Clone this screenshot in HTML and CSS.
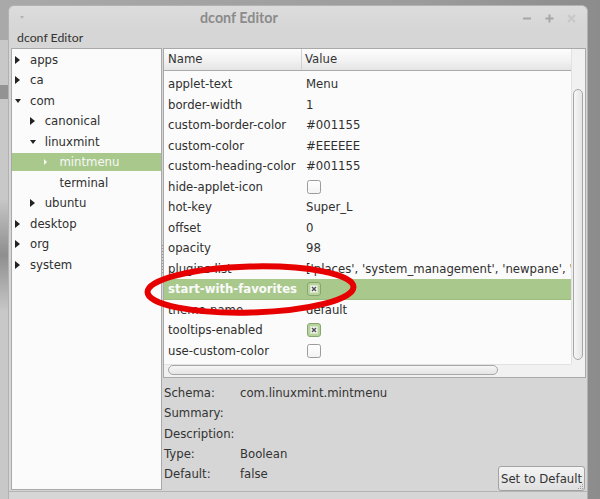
FILE: index.html
```html
<!DOCTYPE html>
<html>
<head>
<meta charset="utf-8">
<title>dconf Editor</title>
<link rel="stylesheet" href="styles.css">
</head>
<body>
<div class="window">
  <div class="titlebar">
    <span class="win-menu"></span>
    <span class="title">dconf Editor</span>
    <svg class="wm-buttons" width="54" height="12" viewBox="0 0 54 12">
      <line x1="0" y1="6.5" x2="8" y2="6.5" stroke="#a6a6a6" stroke-width="2"/>
      <line x1="22.5" y1="6.5" x2="30.5" y2="6.5" stroke="#a6a6a6" stroke-width="2"/>
      <line x1="26.5" y1="2.5" x2="26.5" y2="10.5" stroke="#a6a6a6" stroke-width="2"/>
      <line x1="45" y1="3" x2="52" y2="10" stroke="#c8c8c8" stroke-width="2"/>
      <line x1="52" y1="3" x2="45" y2="10" stroke="#c8c8c8" stroke-width="2"/>
    </svg>
  </div>
  <div class="menubar">dconf Editor</div>
  <div class="client">
    <div class="tree">
      <div class="node l0"><span class="exp closed"></span><span>apps</span></div>
      <div class="node l0"><span class="exp closed"></span><span>ca</span></div>
      <div class="node l0"><span class="exp open"></span><span>com</span></div>
      <div class="node l1"><span class="exp closed"></span><span>canonical</span></div>
      <div class="node l1"><span class="exp open"></span><span>linuxmint</span></div>
      <div class="node l2 sel"><span class="exp closed"></span><span>mintmenu</span></div>
      <div class="node l2"><span class="exp none"></span><span>terminal</span></div>
      <div class="node l1"><span class="exp closed"></span><span>ubuntu</span></div>
      <div class="node l0"><span class="exp closed"></span><span>desktop</span></div>
      <div class="node l0"><span class="exp closed"></span><span>org</span></div>
      <div class="node l0"><span class="exp closed"></span><span>system</span></div>
    </div>
    <div class="handle"><div class="grip"></div></div>
    <div class="right">
      <div class="keys">
        <div class="keys-main">
          <div class="keys-view">
            <div class="header">
              <div class="hcol hname">Name</div>
              <div class="hcol hvalue">Value</div>
            </div>
            <div class="rows">
              <div class="row"><span class="kname">applet-text</span><span class="kval">Menu</span></div>
              <div class="row"><span class="kname">border-width</span><span class="kval">1</span></div>
              <div class="row"><span class="kname">custom-border-color</span><span class="kval">#001155</span></div>
              <div class="row"><span class="kname">custom-color</span><span class="kval">#EEEEEE</span></div>
              <div class="row"><span class="kname">custom-heading-color</span><span class="kval">#001155</span></div>
              <div class="row"><span class="kname">hide-applet-icon</span><span class="kval"><span class="check"></span></span></div>
              <div class="row"><span class="kname">hot-key</span><span class="kval">Super_L</span></div>
              <div class="row"><span class="kname">offset</span><span class="kval">0</span></div>
              <div class="row"><span class="kname">opacity</span><span class="kval">98</span></div>
              <div class="row"><span class="kname">plugins-list</span><span class="kval">['places', 'system_management', 'newpane', 'system', 'applications']</span></div>
              <div class="row sel"><span class="kname">start-with-favorites</span><span class="kval"><svg class="checked" width="14" height="14" viewBox="0 0 14 14"><rect x="0.5" y="0.5" width="13" height="13" rx="2.5" fill="#b7d49c" stroke="#87a56f"/><rect x="3.5" y="3.5" width="7" height="7" fill="#f6f6f6" stroke="#d9e6cc" stroke-width="1"/><line x1="5" y1="5" x2="9" y2="9" stroke="#505050" stroke-width="1.4"/><line x1="9" y1="5" x2="5" y2="9" stroke="#505050" stroke-width="1.4"/></svg></span></div>
              <div class="row"><span class="kname">theme-name</span><span class="kval">default</span></div>
              <div class="row"><span class="kname">tooltips-enabled</span><span class="kval"><svg class="checked" width="14" height="14" viewBox="0 0 14 14"><rect x="0.5" y="0.5" width="13" height="13" rx="2.5" fill="#b7d49c" stroke="#87a56f"/><rect x="3.5" y="3.5" width="7" height="7" fill="#f6f6f6" stroke="#d9e6cc" stroke-width="1"/><line x1="5" y1="5" x2="9" y2="9" stroke="#505050" stroke-width="1.4"/><line x1="9" y1="5" x2="5" y2="9" stroke="#505050" stroke-width="1.4"/></svg></span></div>
              <div class="row"><span class="kname">use-custom-color</span><span class="kval"><span class="check"></span></span></div>
            </div>
          </div>
          <div class="vscroll"><div class="vthumb"></div></div>
        </div>
        <div class="hscroll">
          <div class="htrough"><div class="hthumb"></div></div>
          <div class="corner"></div>
        </div>
      </div>
      <div class="info">
        <div class="info-grid">
          <span>Schema:</span><span>com.linuxmint.mintmenu</span>
          <span>Summary:</span><span></span>
          <span>Description:</span><span></span>
          <span>Type:</span><span>Boolean</span>
          <span>Default:</span><span>false</span>
        </div>
        <button class="btn">Set to Default<svg class="resize-grip" width="7" height="7" viewBox="0 0 7 7"><rect x="5" y="1" width="1" height="1" fill="#9a9a9a"/><rect x="3" y="3" width="1" height="1" fill="#9a9a9a"/><rect x="5" y="3" width="1" height="1" fill="#9a9a9a"/><rect x="1" y="5" width="1" height="1" fill="#9a9a9a"/><rect x="3" y="5" width="1" height="1" fill="#9a9a9a"/><rect x="5" y="5" width="1" height="1" fill="#9a9a9a"/></svg></button>
      </div>
    </div>
  </div>
</div>
<svg class="annotation" width="600" height="499" viewBox="0 0 600 499">
  <ellipse cx="250.5" cy="289.5" rx="103" ry="23" fill="none" stroke="#e60000" stroke-width="6" transform="rotate(-1.5 250.5 289.5)"/>
</svg>
</body>
</html>
```
FILE: styles.css
```css
* { box-sizing: border-box; }
html, body { margin: 0; padding: 0; }
body {
  width: 600px;
  height: 499px;
  overflow: hidden;
  position: relative;
  padding: 5px 0 0 8px;
  font-family: "DejaVu Sans", sans-serif;
  font-size: 11.7px;
  color: #2f2f2f;
  background:
    linear-gradient(#939393, #939393) 0 85px / 8px 14px no-repeat,
    linear-gradient(#c6c6c6, #8e8e8e 50%, #c6c6c6) 0 200px / 8px 110px no-repeat,
    linear-gradient(#c8c8c8, #c8c8c8) 0 40px / 8px 460px no-repeat,
    linear-gradient(to right, #a9a9a9, #9c9c9c 70%, #8c8c8c);
}
.window {
  width: 580px;
  height: 510px;
  border: 1px solid #b2b2b2;
  border-radius: 6px 6px 0 0;
  background: #d6d6d6;
  display: flex;
  flex-direction: column;
}
.titlebar {
  height: 22px;
  flex: none;
  display: flex;
  align-items: center;
  padding: 0 10px 0 11px;
  border-radius: 6px 6px 0 0;
  background: linear-gradient(#dcdcdc, #d6d6d6);
}
.win-menu {
  width: 0; height: 0;
  border-top: 3px solid #b3b3b3;
  border-left: 2.5px solid transparent;
  border-right: 2.5px solid transparent;
  margin-top: 1px;
}
.title {
  margin-left: 176px;
  font-family: Lato, "DejaVu Sans", sans-serif;
  font-weight: bold;
  font-size: 14.3px;
  color: #8b8b8b;
}
.wm-buttons { margin-left: auto; margin-top: 1px; }
.menubar {
  height: 20px;
  flex: none;
  line-height: 20px;
  padding-left: 8px;
  font-family: Lato, "DejaVu Sans", sans-serif;
  font-size: 12.3px;
  color: #333;
}
.client {
  height: 444px;
  flex: none;
  display: flex;
  align-items: flex-start;
  padding: 0 1px 0 2px;
  border-bottom: 1px solid #b4b4b4;
}
.tree {
  width: 151px;
  height: 442px;
  flex: none;
  border: 1px solid #a9a9a9;
  background: #fbfbfb;
  padding-top: 1.5px;
  display: flex;
  flex-direction: column;
  gap: 2.5px;
}
.node {
  height: 18px;
  line-height: 18px;
  display: flex;
  align-items: center;
  white-space: nowrap;
}
.node.l0 { padding-left: 3px; }
.node.l1 { padding-left: 17.7px; }
.node.l2 { padding-left: 32.4px; }
.node.sel { background: #a9c98c; color: #f7f7f7; }
.exp { width: 15px; height: 18px; flex: none; display: flex; align-items: center; }
.exp.closed::before {
  content: "";
  width: 0; height: 0;
  border-left: 5px solid #222;
  border-top: 4px solid transparent;
  border-bottom: 4px solid transparent;
}
.exp.open::before {
  content: "";
  width: 0; height: 0;
  border-top: 4px solid #222;
  border-left: 3.5px solid transparent;
  border-right: 3.5px solid transparent;
}
.node.sel .exp.closed::before {
  border-left: 3.5px solid #f8f8f8;
  border-top: 3px solid transparent;
  border-bottom: 3px solid transparent;
}
.handle { width: 1px; height: 442px; flex: none; }
.grip {
  margin-top: 197px;
  height: 28px;
  width: 1px;
  background: repeating-linear-gradient(#9a9a9a 0 1px, transparent 1px 3px);
}
.right {
  width: 423px;
  height: 443px;
  flex: none;
  display: flex;
  flex-direction: column;
}
.keys {
  height: 330px;
  flex: none;
  border: 1px solid #a9a9a9;
  background: #fbfbfb;
  display: flex;
  flex-direction: column;
}
.keys-main { flex: 1; display: flex; min-height: 0; }
.keys-view { flex: 1; min-width: 0; overflow: hidden; display: flex; flex-direction: column; }
.header {
  height: 22px;
  flex: none;
  display: flex;
  border-bottom: 1px solid #ababab;
  background: linear-gradient(#fdfdfd, #f2f2f2 55%, #e4e4e4);
}
.hcol { line-height: 21px; color: #333; }
.hname { width: 138px; padding-left: 4px; border-right: 1px solid #d2d2d2; }
.hvalue { padding-left: 3px; }
.rows { padding-top: 3px; }
.row {
  height: 20.5px;
  display: flex;
  align-items: center;
  white-space: nowrap;
}
.row.sel { background: #a9c98c; border-bottom: 1px solid #9cbd7f; color: #fafafa; }
.row.sel .kname { font-weight: bold; }
.kname { width: 138px; flex: none; padding-left: 4px; }
.kval { padding-left: 4px; display: flex; align-items: center; }
.check {
  display: block;
  width: 14px; height: 14px;
  margin-left: 1px;
  border: 1px solid #9c9c9c;
  border-radius: 2.5px;
  background: linear-gradient(#ffffff, #f3f3f3);
}
.checked { display: block; margin-left: 1px; }
.vscroll {
  width: 14px;
  flex: none;
  background: #f1f1f1;
  border-left: 1px solid #e2e2e2;
}
.vthumb {
  margin: 40px 0 0 1px;
  width: 10px;
  height: 271px;
  border: 1px solid #a7a7a7;
  border-radius: 5px;
  background: linear-gradient(to right, #f6f6f6, #e4e4e4);
}
.hscroll { height: 13px; flex: none; display: flex; }
.htrough { flex: 1; background: #f1f1f1; border-top: 1px solid #e2e2e2; }
.hthumb {
  margin-left: 4px;
  width: 330px;
  height: 10px;
  border: 1px solid #a7a7a7;
  border-radius: 5px;
  background: linear-gradient(#f6f6f6, #e4e4e4);
}
.corner { width: 14px; flex: none; background: #f1f1f1; }
.info {
  flex: 1;
  display: flex;
  padding: 5px 1px 0 1px;
}
.info-grid {
  display: grid;
  grid-template-columns: 76px auto;
  grid-auto-rows: 20.3px;
  align-items: center;
  color: #333;
}
.btn {
  position: relative;
  margin-left: auto;
  align-self: flex-end;
  width: 87px;
  height: 25px;
  padding: 0;
  font-family: "DejaVu Sans", sans-serif;
  font-size: 11.7px;
  color: #333;
  border: 1px solid #a3a3a3;
  border-radius: 3px;
  background: linear-gradient(#f4f4f4, #dfdfdf);
  white-space: nowrap;
}
.resize-grip { position: absolute; right: 0; bottom: 0; }
.annotation { position: absolute; left: 0; top: 0; pointer-events: none; }
```
